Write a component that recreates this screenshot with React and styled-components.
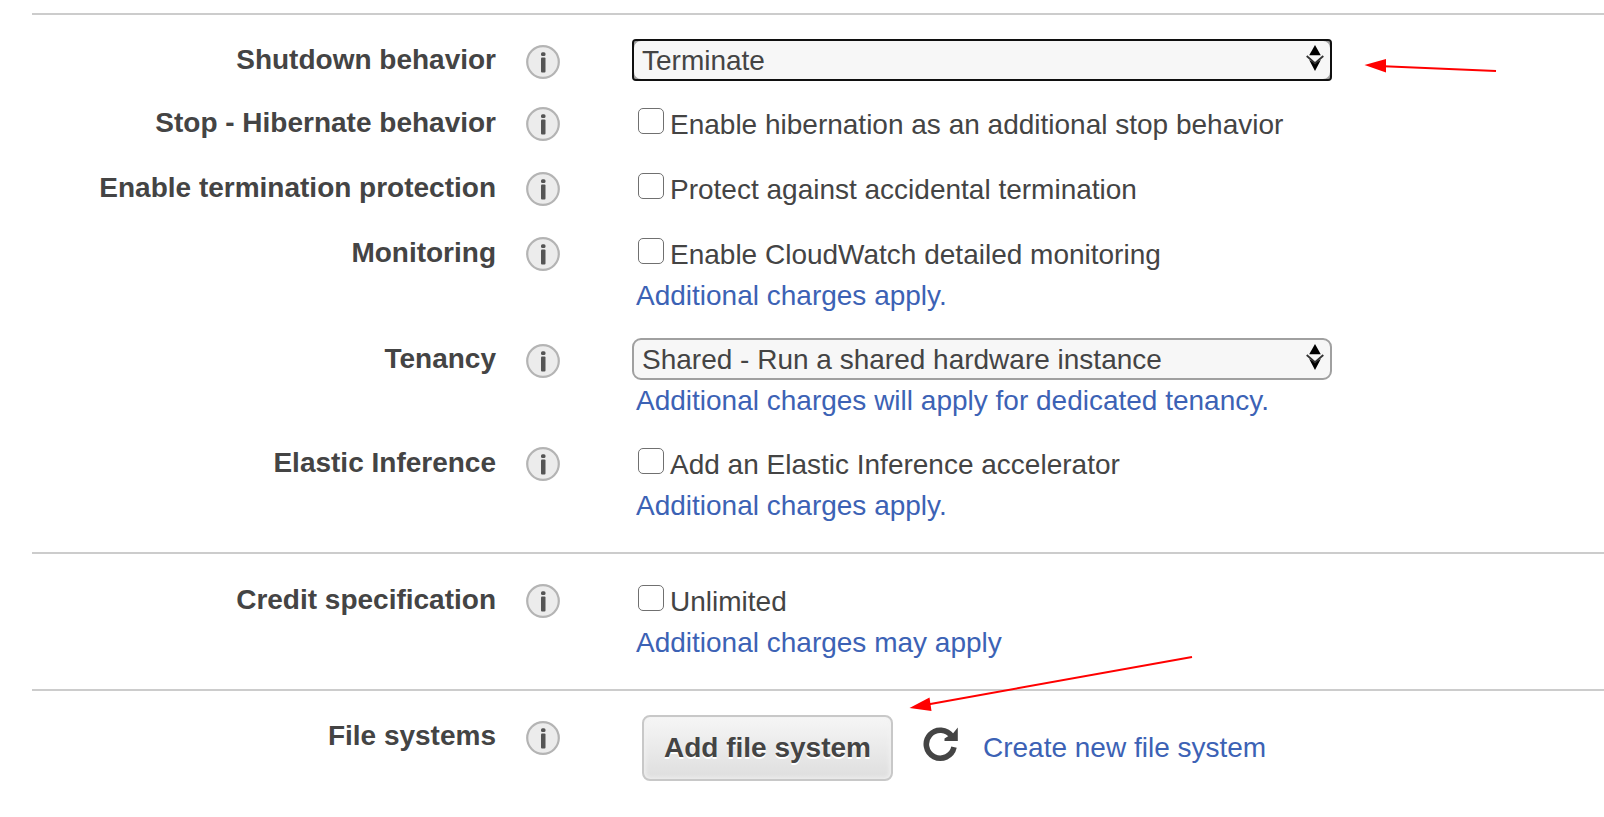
import React, { useId } from "react";
import styled, { createGlobalStyle, css } from "styled-components";

const GlobalStyle = createGlobalStyle`
  *, *::before, *::after { box-sizing: border-box; }
  body {
    margin: 0;
    background: #fff;
    color: #444;
    font: 28px/32px "Liberation Sans", Arial, sans-serif;
  }
`;

const Page = styled.main`
  padding: 13px 0 24px 32px;
  overflow: hidden;
`;

const Section = styled.section`
  display: flex;
  flex-direction: column;
  gap: 22px;
  padding: ${(p) => (p.$roomy ? 26 : 24)}px 0 26px;
  border-top: 2px solid #ccc;
`;

const Row = styled.div`
  display: grid;
  grid-template-columns: 464px 34px minmax(0, 700px);
  align-items: start;
`;

const labelText = css`
  font-weight: bold;
  line-height: ${(p) => (p.$tall ? 42 : 39)}px;
  text-align: right;
`;
const FieldLabel = styled.label`${labelText}`;
const FieldName = styled.span`${labelText}`;

const InfoButton = styled.button`
  display: flex;
  width: 34px;
  height: 34px;
  margin: ${(p) => (p.$tall ? 6 : 4)}px 0 0 30px;
  padding: 0;
  border: 0;
  background: none;
  cursor: pointer;
`;

const Control = styled.div`
  position: relative;
  display: flex;
  flex-direction: column;
  align-items: flex-start;
  margin-left: 102px;
  margin-right: -102px;
`;

const SelectBox = styled.div`
  position: relative;
  width: 100%;
  height: 42px;
  & + a { margin-top: 1px; }
  ${(p) =>
    p.$focused &&
    css`
      &::after {
        content: "";
        position: absolute;
        inset: 0;
        border: 2px solid #101010;
        border-radius: 4px;
        pointer-events: none;
      }
    `}
`;

const Select = styled.select`
  appearance: none;
  display: block;
  width: 100%;
  height: 42px;
  padding: 1px 40px 0 8px;
  border: 2px solid #a0a0a0;
  border-radius: 9px;
  background: #f7f7f7;
  color: #444;
  font: inherit;
  outline: none;
`;

const SelectArrows = styled.svg`
  position: absolute;
  top: 6px;
  right: 8px;
  pointer-events: none;
`;

const CheckLine = styled.label`
  display: flex;
  align-items: baseline;
  gap: 6px;
  padding-left: 6px;
  line-height: 43px;
`;

const Checkbox = styled.input`
  appearance: none;
  width: 26px;
  height: 26px;
  margin: 0;
  border: 1px solid #707070;
  border-radius: 5px;
  background: #fff;
  &:checked { background: #3c62b5; }
`;

const Link = styled.a`
  color: #3c62b5;
  text-decoration: none;
`;

const NoteLink = styled(Link)`
  padding-left: 4px;
  line-height: 40px;
`;

const Actions = styled.div`
  display: flex;
  align-items: center;
  padding-left: 10px;
`;

const Button = styled.button`
  height: 66px;
  padding: 0 20px;
  border: 2px solid #c8c8c8;
  border-radius: 8px;
  background: linear-gradient(#f6f6f6, #dedede);
  box-shadow: inset 0 0 4px 1px #f2f2f2;
  color: #444;
  font: inherit;
  font-weight: bold;
  text-shadow: 0 2px 0 #fff;
  white-space: nowrap;
`;

const RefreshButton = styled.button`
  display: flex;
  margin: 0 24px 8px 30px;
  padding: 0;
  border: 0;
  background: none;
  cursor: pointer;
`;

const Arrow = styled.svg`
  position: absolute;
  top: ${(p) => p.$top}px;
  left: ${(p) => p.$left}px;
  z-index: 1;
  overflow: visible;
  pointer-events: none;
`;

function Info({ topic, tall }) {
  return (
    <InfoButton type="button" $tall={tall} aria-label={`About ${topic}`}>
      <svg width="34" height="34" viewBox="0 0 34 34" aria-hidden="true">
        <circle cx="17" cy="17" r="15.8" fill="#ececec" stroke="#b4b4b4" strokeWidth="2.2" />
        <rect x="15" y="7.2" width="4.5" height="3.8" rx="1.5" fill="#555" />
        <rect x="15" y="12.6" width="4.5" height="15" rx="1" fill="#555" />
      </svg>
    </InfoButton>
  );
}

function SelectField({ label, value, focused, note, children }) {
  const id = useId();
  return (
    <Row>
      <FieldLabel htmlFor={id} $tall>{label}</FieldLabel>
      <Info topic={label} tall />
      <Control>
        <SelectBox $focused={focused}>
          <Select id={id} defaultValue={value}>
            <option>{value}</option>
          </Select>
          <SelectArrows width="18" height="26" viewBox="0 0 18 26" aria-hidden="true">
            <path d="M9 0 14.800 10.300H3.200z" fill="#000" />
            <path d="M3.200 15 9 18l5.800-3L9 26z" fill="#000" />
            <path d="M.7 11 9 18.300 17.300 11" fill="none" stroke="#333" strokeWidth="1.800" />
          </SelectArrows>
        </SelectBox>
        {note && <NoteLink href="#">{note}</NoteLink>}
        {children}
      </Control>
    </Row>
  );
}

function CheckField({ label, text, note }) {
  const id = useId();
  return (
    <Row role="group" aria-labelledby={id}>
      <FieldName id={id}>{label}</FieldName>
      <Info topic={label} />
      <Control>
        <CheckLine>
          <Checkbox type="checkbox" />
          {text}
        </CheckLine>
        {note && <NoteLink href="#">{note}</NoteLink>}
      </Control>
    </Row>
  );
}

export default function App() {
  return (
    <Page>
      <GlobalStyle />
      <Section>
        <SelectField label="Shutdown behavior" value="Terminate" focused>
          <Arrow $top={18} $left={732} width="134" height="18" viewBox="0 0 134 18" aria-hidden="true">
            <path d="M20 9.200 132 14" stroke="#f00" strokeWidth="2" />
            <path d="M.5 8 22 2v13.500z" fill="#f00" />
          </Arrow>
        </SelectField>
        <CheckField label="Stop - Hibernate behavior" text="Enable hibernation as an additional stop behavior" />
        <CheckField label="Enable termination protection" text="Protect against accidental termination" />
        <CheckField label="Monitoring" text="Enable CloudWatch detailed monitoring" note="Additional charges apply." />
        <SelectField
          label="Tenancy"
          value="Shared - Run a shared hardware instance"
          note="Additional charges will apply for dedicated tenancy."
        />
        <CheckField label="Elastic Inference" text="Add an Elastic Inference accelerator" note="Additional charges apply." />
      </Section>
      <Section $roomy>
        <CheckField label="Credit specification" text="Unlimited" note="Additional charges may apply" />
      </Section>
      <Section>
        <Row role="group" aria-label="File systems">
          <FieldName $tall>File systems</FieldName>
          <Info topic="File systems" tall />
          <Control>
            <Actions>
              <Button type="button">Add file system</Button>
              <RefreshButton type="button" aria-label="Refresh file systems">
                <svg width="36" height="36" viewBox="0 0 36 36" aria-hidden="true">
                  <path d="M29 10.500A14 14 0 1 0 31 21.200" fill="none" stroke="#444" strokeWidth="5.600" />
                  <path d="M34.800 1.500v13.500H21.500v-2.500l4-2.500 2 .5z" fill="#444" />
                </svg>
              </RefreshButton>
              <Link href="#">Create new file system</Link>
            </Actions>
            <Arrow $top={-59} $left={277} width="286" height="56" viewBox="0 0 286 56" aria-hidden="true">
              <path d="M20 48.200 283 1" stroke="#f00" strokeWidth="2" />
              <path d="M.5 52 20.500 41.500 22.500 55z" fill="#f00" />
            </Arrow>
          </Control>
        </Row>
      </Section>
    </Page>
  );
}
